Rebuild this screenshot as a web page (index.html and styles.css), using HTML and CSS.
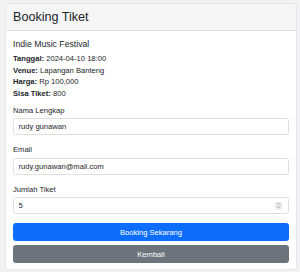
FILE: index.html
```html
<!DOCTYPE html>
<html lang="en">
<head>
    <meta charset="UTF-8">
    <meta name="viewport" content="width=device-width, initial-scale=1.0">
    <title>Booking Tiket</title>
    <link rel="stylesheet" href="styles.css">
</head>
<body>
    <div class="card">
        <div class="card-header">
            <h2>Booking Tiket</h2>
        </div>
        <div class="card-body">
            <h3 class="event-title">Indie Music Festival</h3>
            <p class="info"><b>Tanggal:</b> 2024-04-10 18:00</p>
            <p class="info"><b>Venue:</b> Lapangan Banteng</p>
            <p class="info"><b>Harga:</b> Rp 100,000</p>
            <p class="info"><b>Sisa Tiket:</b> 800</p>

            <form class="booking-form">
                <div class="form-group">
                    <label for="nama">Nama Lengkap</label>
                    <input type="text" id="nama" class="form-control" value="rudy gunawan">
                </div>
                <div class="form-group">
                    <label for="email">Email</label>
                    <input type="text" id="email" class="form-control" value="rudy.gunawan@mail.com">
                </div>
                <div class="form-group">
                    <label for="jumlah">Jumlah Tiket</label>
                    <div class="form-control number-field">
                        <input type="text" id="jumlah" value="5">
                        <span class="spinner">
                            <svg width="5" height="7" viewBox="0 0 5 7">
                                <path d="M1 2.6 L2.5 1 L4 2.6 M1 4.4 L2.5 6 L4 4.4" fill="none" stroke="#9a9a9a" stroke-width="0.8"/>
                            </svg>
                        </span>
                    </div>
                </div>
                <button type="button" class="btn btn-primary">Booking Sekarang</button>
                <button type="button" class="btn btn-secondary">Kembali</button>
            </form>
        </div>
    </div>
</body>
</html>
```
FILE: styles.css
```css
body {
    margin: 3px 3px 3px 5px;
    background-color: #f1f2f4;
    font-family: "Liberation Sans", Arial, sans-serif;
    font-size: 7.6px;
    line-height: 1.5;
    color: #212529;
}
.card {
    background-color: #fff;
    border: 1px solid #e6e7ea;
    border-radius: 3px;
    box-shadow: 0 1px 2px rgba(0, 0, 0, 0.05);
    overflow: hidden;
}
.card-header {
    background-color: #f6f6f7;
    border-bottom: 1px solid #e2e3e5;
    height: 26px;
    display: flex;
    align-items: center;
    padding: 0 7px;
}
.card-header h2 {
    margin: 0;
    font-size: 12.6px;
    font-weight: normal;
}
.card-body {
    padding: 8px 7px 6px;
}
.event-title {
    margin: 0 0 4px;
    font-size: 8.7px;
    font-weight: normal;
    line-height: 1.2;
}
.info {
    margin: 0;
}
.booking-form {
    margin-top: 6px;
}
.form-group {
    margin-bottom: 9px;
}
.form-group label {
    display: block;
    margin-bottom: 2px;
}
.form-control {
    display: block;
    box-sizing: border-box;
    width: 100%;
    height: 17px;
    padding: 0 4.5px;
    border: 1px solid #dfe1e5;
    border-radius: 2.5px;
    font-family: inherit;
    font-size: 7.6px;
    color: #212529;
    background: #fff;
}
.number-field {
    display: flex;
    align-items: center;
}
.number-field input {
    flex: 1;
    border: none;
    padding: 0;
    font-family: inherit;
    font-size: 7.6px;
    color: #212529;
    outline: none;
    min-width: 0;
}
.spinner {
    width: 7px;
    height: 8px;
    background: #ececec;
    border-radius: 1px;
    display: flex;
    align-items: center;
    justify-content: center;
    margin-right: 2px;
}
.btn {
    display: block;
    width: 100%;
    height: 18px;
    border: none;
    border-radius: 3px;
    color: #fff;
    font-family: inherit;
    font-size: 7.6px;
}
.btn-primary {
    background-color: #0d6efd;
    margin-bottom: 4px;
}
.btn-secondary {
    background-color: #6c757d;
}
```
